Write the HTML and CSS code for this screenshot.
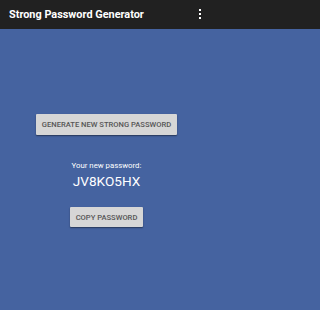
FILE: index.html
```html
<!DOCTYPE html>
<html>
<head>
<meta charset="utf-8">
<link rel="stylesheet" href="styles.css">
</head>
<body>
<div class="app">
  <header class="toolbar">
    <span class="title">Strong Password Generator</span>
    <span class="menu"><i></i><i></i><i></i></span>
  </header>
  <main class="content">
    <button class="btn btn-generate">GENERATE NEW STRONG PASSWORD</button>
    <div class="label">Your new password:</div>
    <div class="password">JV8KO5HX</div>
    <button class="btn btn-copy">COPY PASSWORD</button>
  </main>
</div>
</body>
</html>
```
FILE: styles.css
```css
html, body {
  margin: 0;
  padding: 0;
  height: 100%;
}
html {
  background: linear-gradient(to bottom, #212121 0, #212121 29px, #4563a0 29px);
}
body {
  font-family: Roboto, "Liberation Sans", sans-serif;
}
.app {
  display: flex;
  flex-direction: column;
  width: 213px;
  height: 100%;
  background: #4563a0;
}
.toolbar {
  height: 29px;
  background: #212121;
  display: flex;
  align-items: center;
  justify-content: space-between;
  padding: 0 12px 0 9px;
  box-sizing: border-box;
  flex: none;
}
.title {
  color: #ffffff;
  font-weight: 700;
  font-size: 10.9px;
}
.menu {
  display: flex;
  flex-direction: column;
  gap: 1.5px;
  margin-top: -1px;
}
.menu i {
  display: block;
  width: 2.5px;
  height: 2.5px;
  background: #fff;
}
.content {
  flex: 1;
  display: flex;
  flex-direction: column;
  align-items: center;
  padding-top: 85px;
}
.btn {
  font-family: Roboto, "Liberation Sans", sans-serif;
  font-weight: 500;
  color: #555555;
  background: #d6d6d6;
  border: none;
  border-radius: 1px;
  box-shadow: 0 1px 1.5px rgba(0,0,0,0.45);
  padding: 0;
  margin: 0;
  white-space: nowrap;
}
.btn-generate {
  width: 141px;
  height: 21px;
  font-size: 7.6px;
}
.label {
  color: #ffffff;
  font-size: 7.8px;
  margin-top: 26px;
  line-height: 10px;
}
.password {
  color: #ffffff;
  font-size: 13.6px;
  line-height: 16px;
  margin-top: 2px;
}
.btn-copy {
  width: 73px;
  height: 20px;
  font-size: 7.6px;
  margin-top: 18px;
}
```
